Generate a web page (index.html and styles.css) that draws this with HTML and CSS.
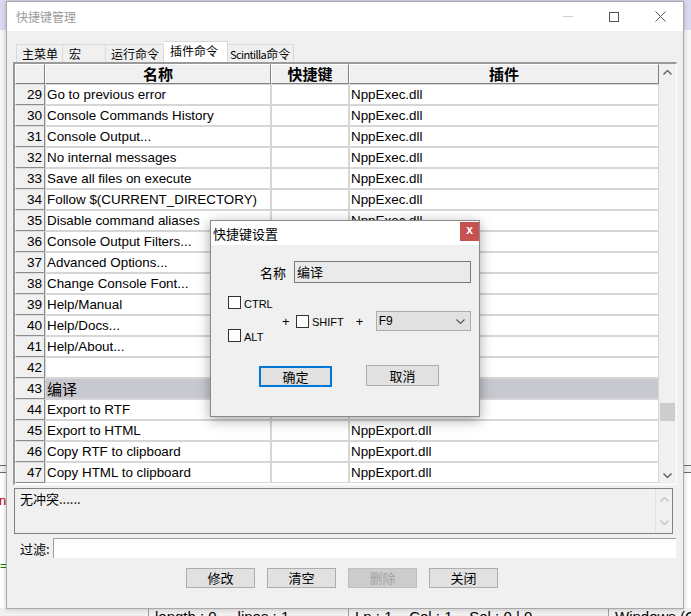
FILE: index.html
```html
<!DOCTYPE html>
<html>
<head>
<meta charset="utf-8">
<title>快捷键管理</title>
<link rel="stylesheet" href="styles.css">
</head>
<body>
<div class="bgapp">
  <div class="bg-title"></div>
  <div class="bg-edit"></div>
  <div class="bg-split"></div>
  <div class="bg-console">
    <div class="bg-red">ne</div>
    <div class="bg-green">==</div>
  </div>
  <div class="bg-status">
    <div class="st st1"></div>
    <div class="st st2">length : 0&nbsp;&nbsp;&nbsp;&nbsp; lines : 1</div>
    <div class="st st3">Ln : 1&nbsp;&nbsp;&nbsp; Col : 1&nbsp;&nbsp;&nbsp; Sel : 0 | 0</div>
    <div class="st st4">Windows (CR LF)</div>
  </div>
</div>

<div class="win">
  <div class="win-title">
    <span class="win-caption">快捷键管理</span>
    <div class="win-ctrls">
      <div class="wc"><svg width="10" height="1" viewBox="0 0 10 1"><rect width="10" height="1" fill="#cfcfcf"/></svg></div>
      <div class="wc"><svg width="10" height="10" viewBox="0 0 10 10"><rect x="0.5" y="0.5" width="9" height="9" fill="none" stroke="#555" stroke-width="1"/></svg></div>
      <div class="wc"><svg width="11" height="11" viewBox="0 0 11 11"><path d="M0.5 0.5L10.5 10.5M10.5 0.5L0.5 10.5" stroke="#555" stroke-width="1" fill="none"/></svg></div>
    </div>
  </div>
  <div class="win-body">
    <div class="tabs">
      <div class="tab t1">主菜单</div>
      <div class="tab t2">宏</div>
      <div class="tab t3">运行命令</div>
      <div class="tab t4 active">插件命令</div>
      <div class="tab t5"><span class="scin">Scintilla</span>命令</div>
    </div>
    <div class="frame">
      <div class="grid">
        <div class="hc"></div>
        <div class="hc">名称</div>
        <div class="hc">快捷键</div>
        <div class="hc">插件</div>

        <div class="rn">29</div><div class="c">Go to previous error</div><div class="c"></div><div class="c">NppExec.dll</div>
        <div class="rn">30</div><div class="c">Console Commands History</div><div class="c"></div><div class="c">NppExec.dll</div>
        <div class="rn">31</div><div class="c">Console Output...</div><div class="c"></div><div class="c">NppExec.dll</div>
        <div class="rn">32</div><div class="c">No internal messages</div><div class="c"></div><div class="c">NppExec.dll</div>
        <div class="rn">33</div><div class="c">Save all files on execute</div><div class="c"></div><div class="c">NppExec.dll</div>
        <div class="rn">34</div><div class="c">Follow $(CURRENT_DIRECTORY)</div><div class="c"></div><div class="c">NppExec.dll</div>
        <div class="rn">35</div><div class="c">Disable command aliases</div><div class="c"></div><div class="c">NppExec.dll</div>
        <div class="rn">36</div><div class="c">Console Output Filters...</div><div class="c"></div><div class="c">NppExec.dll</div>
        <div class="rn">37</div><div class="c">Advanced Options...</div><div class="c"></div><div class="c">NppExec.dll</div>
        <div class="rn">38</div><div class="c">Change Console Font...</div><div class="c"></div><div class="c">NppExec.dll</div>
        <div class="rn">39</div><div class="c">Help/Manual</div><div class="c"></div><div class="c">NppExec.dll</div>
        <div class="rn">40</div><div class="c">Help/Docs...</div><div class="c"></div><div class="c">NppExec.dll</div>
        <div class="rn">41</div><div class="c">Help/About...</div><div class="c"></div><div class="c">NppExec.dll</div>
        <div class="rn">42</div><div class="c"></div><div class="c"></div><div class="c">NppExec.dll</div>
        <div class="rn">43</div><div class="c sel cjk">编译</div><div class="c sel"></div><div class="c sel"></div>
        <div class="rn">44</div><div class="c">Export to RTF</div><div class="c"></div><div class="c">NppExport.dll</div>
        <div class="rn">45</div><div class="c">Export to HTML</div><div class="c"></div><div class="c">NppExport.dll</div>
        <div class="rn">46</div><div class="c">Copy RTF to clipboard</div><div class="c"></div><div class="c">NppExport.dll</div>
        <div class="rn">47</div><div class="c">Copy HTML to clipboard</div><div class="c"></div><div class="c">NppExport.dll</div>
      </div>
      <div class="vscroll">
        <div class="sb-btn"><svg width="9" height="5" viewBox="0 0 9 5"><polyline points="0.5,4.5 4.5,0.5 8.5,4.5" fill="none" stroke="#606060" stroke-width="1.4"/></svg></div>
        <div class="sb-track"><div class="sb-thumb"></div></div>
        <div class="sb-btn"><svg width="9" height="5" viewBox="0 0 9 5"><polyline points="0.5,0.5 4.5,4.5 8.5,0.5" fill="none" stroke="#606060" stroke-width="1.4"/></svg></div>
      </div>
    </div>
    <div class="conflict">
      <div class="conflict-text">无冲突......</div>
      <div class="cscroll">
        <svg width="9" height="5" viewBox="0 0 9 5"><polyline points="0.5,4.5 4.5,0.5 8.5,4.5" fill="none" stroke="#c4c4c4" stroke-width="1.4"/></svg>
        <svg width="9" height="5" viewBox="0 0 9 5"><polyline points="0.5,0.5 4.5,4.5 8.5,0.5" fill="none" stroke="#c4c4c4" stroke-width="1.4"/></svg>
      </div>
    </div>
    <div class="filter">
      <span class="filter-label">过滤:</span>
      <div class="filter-input"></div>
    </div>
    <div class="buttons">
      <div class="btn">修改</div>
      <div class="btn">清空</div>
      <div class="btn disabled">删除</div>
      <div class="btn">关闭</div>
    </div>
  </div>
</div>

<div class="dlg">
  <div class="dlg-title">
    <span class="dlg-caption">快捷键设置</span>
    <div class="dlg-close">x</div>
  </div>
  <div class="dlg-body">
    <div class="d-name">
      <span class="d-label">名称</span>
      <div class="d-input">编译</div>
    </div>
    <div class="d-mods">
      <div class="d-col">
        <div class="chk"><span class="box"></span><span class="chk-l">CTRL</span></div>
        <div class="chk"><span class="box"></span><span class="chk-l">ALT</span></div>
      </div>
      <div class="d-right">
        <span class="plus">+</span>
        <div class="chk"><span class="box"></span><span class="chk-l">SHIFT</span></div>
        <span class="plus plus2">+</span>
        <div class="combo"><span>F9</span><svg width="9" height="5" viewBox="0 0 9 5"><polyline points="0.5,0.5 4.5,4.5 8.5,0.5" fill="none" stroke="#555" stroke-width="1.1"/></svg></div>
      </div>
    </div>
    <div class="d-btns">
      <div class="dbtn ok">确定</div>
      <div class="dbtn cancel">取消</div>
    </div>
  </div>
</div>
</body>
</html>
```
FILE: styles.css
```css
* { box-sizing: border-box; }
html, body { margin: 0; padding: 0; }
body {
  width: 691px; height: 616px; overflow: hidden; position: relative;
  background: #f0f0f0;
  font-family: "Liberation Sans", "Noto Sans CJK SC", sans-serif;
  color: #000;
}
.cjk { font-family: "Noto Sans CJK SC", sans-serif; }

/* background application */
.bgapp { position: absolute; left: 0; top: 0; width: 691px; height: 628px; display: flex; flex-direction: column; }
.bg-title { height: 30px; background: #dadbf0; flex: none; }
.bg-edit { height: 435px; background: #f7f7f7; flex: none; }
.bg-split { height: 8px; border-top: 1px solid #6a6a6a; border-bottom: 1px solid #6a6a6a; background: #f0f0f0; flex: none; }
.bg-console { flex: 1; background: #fff; padding-top: 20px; font: 13px "Liberation Sans", sans-serif; }
.bg-red { color: #c00000; margin-left: -1px; }
.bg-green { color: #008000; margin-top: 50px; }
.bg-status { height: 20px; flex: none; background: #f0f0f0; display: flex; font: 15px/18px "Liberation Sans", sans-serif; }
.st { border-right: 1px solid #a0a0a0; padding-left: 6px; white-space: nowrap; overflow: hidden; }
.st1 { width: 149px; }
.st2 { width: 200px; }
.st3 { width: 260px; }
.st4 { flex: 1; border-right: none; }

/* main window */
.win {
  position: absolute; left: 6px; top: 1px; width: 678px; height: 608px;
  background: #f0f0f0; border: 1px solid #a9a9a9;
  box-shadow: 0 0 5px rgba(0,0,0,0.22);
  display: flex; flex-direction: column;
}
.win-title { height: 29px; background: #fff; display: flex; align-items: center; flex: none; }
.win-caption { padding-left: 9px; font: 12px "Noto Sans CJK SC", sans-serif; color: #9a9a9a; }
.win-ctrls { margin-left: auto; display: flex; height: 29px; }
.wc { width: 46px; height: 29px; display: flex; align-items: center; justify-content: center; }

.win-body { padding: 10px 0 0 6px; display: flex; flex-direction: column; }

.tabs { display: flex; align-items: flex-end; height: 21px; margin-left: 3px; }
.tab {
  height: 18px; border: 1px solid #d9d9d9; border-bottom: none; border-left: none;
  background: #f0f0f0; font: 12px/17px "Noto Sans CJK SC", sans-serif; padding-left: 5px; white-space: nowrap;
}
.t1 { width: 47px; border-left: 1px solid #d9d9d9; }
.t2 { width: 43px; padding-left: 6px; }
.t3 { width: 58px; }
.t4 { width: 64px; }
.t5 { width: 66px; padding-left: 2px; }
.tab.active { height: 21px; background: #fff; padding-left: 6px; line-height: 18px; }
.scin { letter-spacing: -0.6px; font-size: 11px; }

.frame {
  width: 664px; height: 423px; display: flex;
  border-top: 2px solid #9a9a9a; border-left: 2px solid #9a9a9a;
  border-right: 1px solid #fff; border-bottom: 1px solid #fff;
  background: #fff;
}
.grid {
  width: 644px; height: 420px; overflow: hidden;
  display: grid; grid-template-columns: 30px 226px 78px 310px;
  grid-template-rows: 20px; grid-auto-rows: 21px;
}
.hc {
  background: #f0f0f0;
  border-top: 1px solid #fff; border-left: 1px solid #fff;
  border-right: 1px solid #808080; border-bottom: 1px solid #808080;
  font: bold 15px/18px "Noto Sans CJK SC", sans-serif; text-align: center;
}
.rn {
  background: #f0f0f0; border: 1px solid; border-color: #dcdcdc #8c8c8c #8c8c8c #fafafa;
  text-align: right; padding-right: 2px; font-size: 13.6px; line-height: 19px;
}
.c {
  background: #fff; border: 1px solid #d6d6d6; padding-left: 1px;
  font-size: 13.4px; line-height: 19px; white-space: nowrap; overflow: hidden;
}
.c.cjk { font-size: 15px; }
.c.sel { background: #c8c8d0; border-color: #d6d6dc; }

.vscroll { width: 17px; background: #f0f0f0; display: flex; flex-direction: column; }
.sb-btn { height: 17px; display: flex; align-items: center; justify-content: center; }
.sb-track { flex: 1; }
.sb-thumb { margin: 322px 0 0 1px; width: 15px; height: 18px; background: #cdcdcd; }

.conflict {
  margin: 3px 0 0 1px; width: 659px; height: 46px;
  border: 1px solid #828282; background: #f0f0f0; display: flex;
}
.conflict-text { flex: 1; padding: 1px 0 0 5px; font: 13px/18px "Noto Sans CJK SC", sans-serif; }
.cscroll {
  width: 17px; border-left: 1px solid #e2e2e2; display: flex; flex-direction: column;
  align-items: center; justify-content: space-between; padding: 8px 0 8px;
}

.filter { margin-top: 4px; height: 20px; display: flex; align-items: center; }
.filter-label { margin-left: 7px; width: 33px; font: 13px "Noto Sans CJK SC", sans-serif; }
.filter-input { width: 623px; height: 20px; background: #fff; border-top: 1px solid #a0a0a0; border-left: 1px solid #a0a0a0; }

.buttons { margin: 10px 0 0 173px; display: flex; gap: 12px; }
.btn {
  width: 69px; height: 20px; background: #e1e1e1; border: 1px solid #adadad;
  text-align: center; font: 13px/18px "Noto Sans CJK SC", sans-serif;
}
.btn.disabled { background: #cccccc; border-color: #bfbfbf; color: #a3a3a3; }

/* dialog */
.dlg {
  position: absolute; left: 210px; top: 220px; width: 270px; height: 197px;
  border: 1px solid #8a8a8a; background: #f0f0f0;
  box-shadow: 0 3px 12px rgba(0,0,0,0.35);
  display: flex; flex-direction: column;
}
.dlg-title { height: 24px; background: #fff; display: flex; align-items: center; flex: none; }
.dlg-caption { padding-left: 2px; font: 13px "Noto Sans CJK SC", sans-serif; }
.dlg-close {
  margin-left: auto; width: 19px; height: 19px; background: #c75050; color: #fff;
  font: bold 12px/17px "Liberation Sans", sans-serif; text-align: center; align-self: flex-start; margin-top: 1px;
}
.dlg-body { display: flex; flex-direction: column; }
.d-name { margin-top: 16px; height: 22px; display: flex; align-items: center; padding-left: 49px; }
.d-label { width: 34px; font: 13px "Noto Sans CJK SC", sans-serif; }
.d-input {
  width: 177px; height: 22px; background: #eaeaea; border: 1px solid #7a7a7a;
  padding: 1px 0 0 2px; font: 13px/18px "Noto Sans CJK SC", sans-serif;
}
.d-mods { margin-top: 13px; height: 46px; display: flex; padding-left: 17px; }
.d-col { width: 54px; display: flex; flex-direction: column; justify-content: space-between; }
.chk { display: flex; align-items: center; height: 13px; }
.box { width: 13px; height: 13px; background: #fff; border: 1px solid #333; flex: none; }
.chk-l { margin-left: 3px; font: 11px "Liberation Sans", sans-serif; position: relative; top: 1px; }
.d-right { display: flex; align-items: center; height: 20px; margin-top: 15px; }
.plus { font: 13px "Liberation Sans", sans-serif; width: 14px; }
.plus2 { margin-left: 12px; width: 20px; }
.combo {
  width: 95px; height: 20px; background: #e1e1e1; border: 1px solid #acacac;
  display: flex; align-items: center; justify-content: space-between; padding: 0 5px 0 2px;
  font: 12px "Liberation Sans", sans-serif;
}
.d-btns { margin-top: 23px; display: flex; padding-left: 48px; align-items: flex-start; }
.dbtn {
  width: 73px; height: 21px; background: #e1e1e1; border: 1px solid #adadad;
  text-align: center; font: 13px/19px "Noto Sans CJK SC", sans-serif;
}
.dbtn.ok { border: 2px solid #0078d7; line-height: 17px; margin-top: 1px; }
.dbtn.cancel { margin-left: 34px; }
```
